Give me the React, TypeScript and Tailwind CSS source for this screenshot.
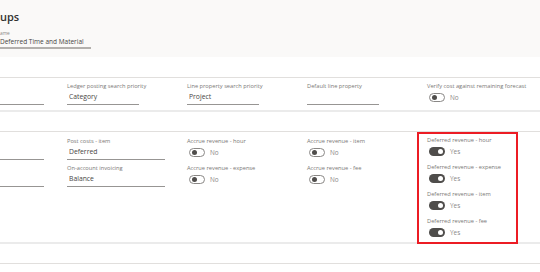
import React from "react";

const font = { fontFamily: '"Open Sans", "Noto Sans", sans-serif' };

function Label({ children }: { children: React.ReactNode }) {
  return (
    <div className="h-[8px] text-[5.7px] leading-[8px] text-[#7a7876] whitespace-nowrap">
      {children}
    </div>
  );
}

function TextField({ label, value, w }: { label: string; value?: string; w: string }) {
  return (
    <div className="flex flex-col">
      <Label>{label}</Label>
      <div className={`h-[15px] ${w} border-b border-[#979593] pl-[2px] flex items-center text-[6.8px] text-[#484644] whitespace-nowrap`}>
        {value}
      </div>
    </div>
  );
}

function Toggle({ label, on }: { label: string; on?: boolean }) {
  return (
    <div className="flex flex-col">
      <Label>{label}</Label>
      <div className="h-[15px] flex items-center gap-[5px] pl-[2px]">
        {on ? (
          <div className="w-[16px] h-[9px] rounded-full bg-[#4f4d4b] flex items-center justify-end pr-[2px]">
            <div className="w-[5px] h-[5px] rounded-full bg-white" />
          </div>
        ) : (
          <div className="w-[16px] h-[9px] rounded-full bg-white border border-[#8a8886] flex items-center pl-[1.5px]">
            <div className="w-[5px] h-[5px] rounded-full bg-[#4f4d4b]" />
          </div>
        )}
        <span className="text-[6.4px] text-[#8a8886]">{on ? "Yes" : "No"}</span>
      </div>
    </div>
  );
}

export default function App() {
  return (
    <div className="w-[540px] h-[272px] overflow-hidden bg-white" style={font}>
      {/* Header */}
      <div className="h-[57px] bg-[#faf9f8] pt-[10px]">
        <div className="text-[11px] leading-[14px] font-semibold text-[#323130]">ups</div>
        <div className="mt-[5px] h-[8px] text-[4.8px] leading-[8px] text-[#8a8886]">ame</div>
        <div className="h-[12px] w-[91px] border-b-2 border-[#b3b0ad] flex items-center text-[6.5px] text-[#484644] whitespace-nowrap">
          Deferred Time and Material
        </div>
      </div>

      <div className="h-[20px]" />

      {/* Section 1 */}
      <div className="border-t border-[#e1dfdd] h-[33px] pt-[4px] flex">
        <div className="w-[67px] flex flex-col">
          <div className="h-[8px]" />
          <div className="h-[15px] w-[44px] border-b border-[#979593]" />
        </div>
        <div className="w-[120px]">
          <TextField label="Ledger posting search priority" value="Category" w="w-[72px]" />
        </div>
        <div className="w-[120px]">
          <TextField label="Line property search priority" value="Project" w="w-[72px]" />
        </div>
        <div className="w-[120px]">
          <TextField label="Default line property" w="w-[72px]" />
        </div>
        <div className="w-[113px]">
          <Toggle label="Verify cost against remaining forecast" />
        </div>
      </div>

      <div className="h-[2px] bg-[#ebebeb]" />
      <div className="h-[19px]" />

      {/* Section 2 */}
      <div className="border-t border-[#e1dfdd] h-[111px] flex">
        <div className="w-[67px] flex flex-col gap-[4px] pt-[5px]">
          <div className="flex flex-col">
            <div className="h-[8px]" />
            <div className="h-[15px] w-[44px] border-b border-[#979593]" />
          </div>
          <div className="flex flex-col">
            <div className="h-[8px]" />
            <div className="h-[15px] w-[44px] border-b border-[#979593]" />
          </div>
        </div>
        <div className="w-[120px] flex flex-col gap-[4px] pt-[5px]">
          <TextField label="Post costs - item" value="Deferred" w="w-[98px]" />
          <TextField label="On-account invoicing" value="Balance" w="w-[98px]" />
        </div>
        <div className="w-[120px] flex flex-col gap-[4px] pt-[5px]">
          <Toggle label="Accrue revenue - hour" />
          <Toggle label="Accrue revenue - expense" />
        </div>
        <div className="w-[110px] flex flex-col gap-[4px] pt-[5px]">
          <Toggle label="Accrue revenue - item" />
          <Toggle label="Accrue revenue - fee" />
        </div>
        <div className="w-[101px] h-[112px] border-2 border-[#ec1c24] pl-[8px] pt-[2px] flex flex-col gap-[4px]">
          <Toggle label="Deferred revenue - hour" on />
          <Toggle label="Deferred revenue - expense" on />
          <Toggle label="Deferred revenue - item" on />
          <Toggle label="Deferred revenue - fee" on />
        </div>
      </div>

      <div className="h-[2px] bg-[#ebebeb]" />
      <div className="h-[19px]" />
      <div className="border-t border-[#e1dfdd]" />
    </div>
  );
}
